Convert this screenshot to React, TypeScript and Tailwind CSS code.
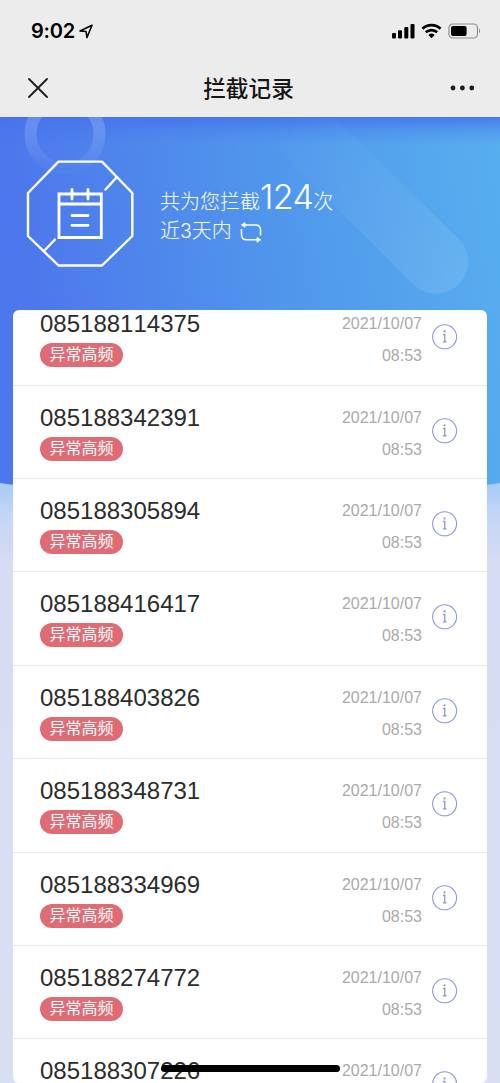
const numbers = [
  "085188114375",
  "085188342391",
  "085188305894",
  "085188416417",
  "085188403826",
  "085188348731",
  "085188334969",
  "085188274772",
  "085188307226",
];

const StatusBar = () => {
  return (
    <div className="flex h-[60px] items-center justify-between pl-[31px] pr-[19px] text-black">
      <div className="flex items-center pt-[2px]">
        <span className="font-['Inter'] text-[20px] font-semibold leading-6 tracking-[-0.2px]">
          9:02
        </span>
        <svg width="15" height="15" viewBox="0 0 15 15" fill="none" className="ml-[4px]">
          <path
            d="M1 7 13 1.2 7.9 13.6 7.1 7.6Z"
            stroke="black"
            strokeWidth="1.5"
            strokeLinejoin="round"
          />
        </svg>
      </div>
      <svg width="90" height="16" viewBox="0 0 90 16" className="mt-px">
        <rect x="1" y="10" width="4" height="5.5" rx="1" />
        <rect x="7" y="7.3" width="4" height="8.2" rx="1" />
        <rect x="13.3" y="4" width="4" height="11.5" rx="1" />
        <rect x="19.5" y="1" width="4" height="14.5" rx="1" />
        <g fill="none" stroke="black" strokeWidth="2.7">
          <path d="M31.5 5.7a13 13 0 0 1 18 0" />
          <path d="M34.8 9.3a8.4 8.4 0 0 1 11.4 0" />
        </g>
        <path d="M37.4 12a4.6 4.6 0 0 1 6.2 0L40.5 15.2Z" />
        <rect x="57.9" y="1" width="28.6" height="14" rx="4" fill="none" stroke="#8d8d8d" strokeWidth="1.2" />
        <rect x="60" y="3" width="15.6" height="10" rx="2" />
        <path d="M88 5.6a3 3 0 0 1 0 4.6Z" fill="#8d8d8d" />
      </svg>
    </div>
  );
};

const NavBar = () => {
  return (
    <div className="flex h-[57px] items-center justify-between pl-7 pr-[25px]">
      <svg width="20" height="20" viewBox="0 0 20 20" stroke="#1b1b1b" strokeWidth="1.8" strokeLinecap="round" className="-mt-[2px]">
        <path d="M1 1 19 19M19 1 1 19" />
      </svg>
      <h1 className="-ml-[1px] text-[22.7px] font-medium leading-8 text-[#161616]">拦截记录</h1>
      <svg width="25" height="6" viewBox="0 0 25 6" fill="#1b1b1b" className="-mt-px">
        <circle cx="3" cy="3" r="2.4" />
        <circle cx="12.4" cy="3" r="2.4" />
        <circle cx="21.8" cy="3" r="2.4" />
      </svg>
    </div>
  );
};

const Backdrop = () => {
  return (
    <svg className="absolute inset-0" width="500" height="966" viewBox="0 117 500 966">
      <defs>
        <linearGradient id="sky" x1="0" y1="0" x2="1" y2="-0.12">
          <stop offset="0" stopColor="#4d77ec" />
          <stop offset="0.5" stopColor="#5096ec" />
          <stop offset="1" stopColor="#57b0ee" />
        </linearGradient>
        <linearGradient id="shade" x1="0" y1="0" x2="0" y2="1">
          <stop offset="0" stopColor="#4672ec" stopOpacity="0.85" />
          <stop offset="0.5" stopColor="#4672ec" stopOpacity="0.3" />
          <stop offset="1" stopColor="#4672ec" stopOpacity="0" />
        </linearGradient>
        <linearGradient id="ring" x1="0" y1="0" x2="0" y2="1">
          <stop offset="0.4" stopColor="white" stopOpacity="0.17" />
          <stop offset="1" stopColor="white" stopOpacity="0.02" />
        </linearGradient>
        <linearGradient id="beam" gradientUnits="userSpaceOnUse" x1="290" y1="120" x2="450" y2="280">
          <stop offset="0" stopColor="white" stopOpacity="0" />
          <stop offset="1" stopColor="white" stopOpacity="0.1" />
        </linearGradient>
        <linearGradient id="fade" x1="0" y1="0" x2="0" y2="1">
          <stop offset="0" stopColor="#a3cbf8" />
          <stop offset="0.06" stopColor="#c4d6f5" />
          <stop offset="0.14" stopColor="#d6dcf3" />
          <stop offset="1" stopColor="#d9dff3" />
        </linearGradient>
      </defs>
      <rect y="480" width="500" height="603" fill="url(#fade)" />
      <path d="M0 117H500V483Q250 520 0 483Z" fill="url(#sky)" />
      <rect y="117" width="500" height="28" fill="url(#shade)" />
      <circle cx="65" cy="134" r="34.5" fill="none" stroke="url(#ring)" strokeWidth="12" />
      <path d="M334 117 458 238A31 31 0 0 1 414 285L246 117Z" fill="url(#beam)" />
    </svg>
  );
};

const Summary = () => {
  return (
    <div className="relative flex h-[193px] items-center pl-[26px] text-white">
      <svg width="108" height="108" viewBox="0 0 108 108" fill="none" stroke="white" strokeWidth="2.4">
        <path d="M32.5 1.6H76L106.3 33V76L76 105.5H32.5L2 76V33Z" strokeLinejoin="round" />
        <path d="M90.5 17.5 79.5 29.5M18.5 90.5 29 79.5" strokeLinecap="round" />
        <path d="M33 34H75.3V77.5H33ZM33 44H75.3" strokeWidth="2.8" />
        <path d="M46 29.5V39M62 29.5V39M46 55.5H62M46 65.3H62" strokeWidth="2.8" strokeLinecap="round" />
      </svg>
      <div className="-mt-[2px] ml-[26px] font-light">
        <div className="flex items-baseline text-[20px] leading-[34px]">
          <span>共为您拦截</span>
          <span className="font-['Inter'] text-[34px] tracking-[-0.6px]">124</span>
          <span>次</span>
        </div>
        <div className="-mt-[3px] flex items-center text-[20px] leading-[30px]">
          <span>
            近<span className="font-['Inter'] text-[19.5px]">3</span>天内
          </span>
          <svg width="23" height="23" viewBox="0 0 23 23" fill="none" stroke="white" strokeWidth="1.5" className="ml-2 mt-1">
            <path d="M4 4H15.5Q20.5 4 20.5 9V14.5M1.5 8V13.5Q1.5 18.8 6.8 18.8H18" />
            <path d="M5 1.6 1.2 4 5 6.4ZM17 16.4 20.8 18.8 17 21.2Z" fill="white" strokeWidth="0.8" />
          </svg>
        </div>
      </div>
    </div>
  );
};

const Row = ({ number }: { number: string }) => {
  return (
    <li className="flex h-[93.4px] shrink-0 justify-between border-b border-[#e8ebee] pl-[27px] pr-[30px]">
      <div className="pt-[17px]">
        <div className="text-[24px] leading-[30px] text-[#2c2c2c] [font-kerning:none]">{number}</div>
        <span className="mt-[4px] flex h-6 w-[83px] items-center justify-center rounded-full bg-[#df6b75] text-[16px] leading-none text-white">
          异常高频
        </span>
      </div>
      <div className="flex">
        <div className="pt-[16px] text-right text-[16px] leading-8 text-[#aaa]">
          <div>2021/10/07</div>
          <div>08:53</div>
        </div>
        <svg width="26" height="26" viewBox="0 0 26 26" className="ml-[10px] mt-8 -mr-px" fill="none" stroke="#8d96de">
          <circle cx="12.6" cy="12.8" r="12" strokeWidth="1.1" />
          <path d="M11 10.5H12.8V17.8M10.8 17.8H14.6" strokeWidth="1.3" />
          <circle cx="12.5" cy="7.4" r="1.1" fill="#8d96de" stroke="none" />
        </svg>
      </div>
    </li>
  );
};

const App = () => {
  return (
    <div className="relative flex h-[1083px] w-[500px] flex-col overflow-hidden bg-[#ececec] font-['Liberation_Sans','Noto_Sans_CJK_SC',sans-serif]">
      <StatusBar />
      <NavBar />
      <main className="relative h-[966px]">
        <Backdrop />
        <Summary />
        <div className="relative mx-[13px] h-[773px] overflow-hidden rounded-md bg-white">
          {/* the list is scrolled a little, so the first row is cut off */}
          <ul className="-mt-[17.8px] flex flex-col">
            {numbers.map((number) => (
              <Row key={number} number={number} />
            ))}
          </ul>
        </div>
      </main>
      <div className="absolute bottom-[11px] left-[161px] h-[7px] w-[179px] rounded-full bg-black" />
    </div>
  );
};

export default App;
